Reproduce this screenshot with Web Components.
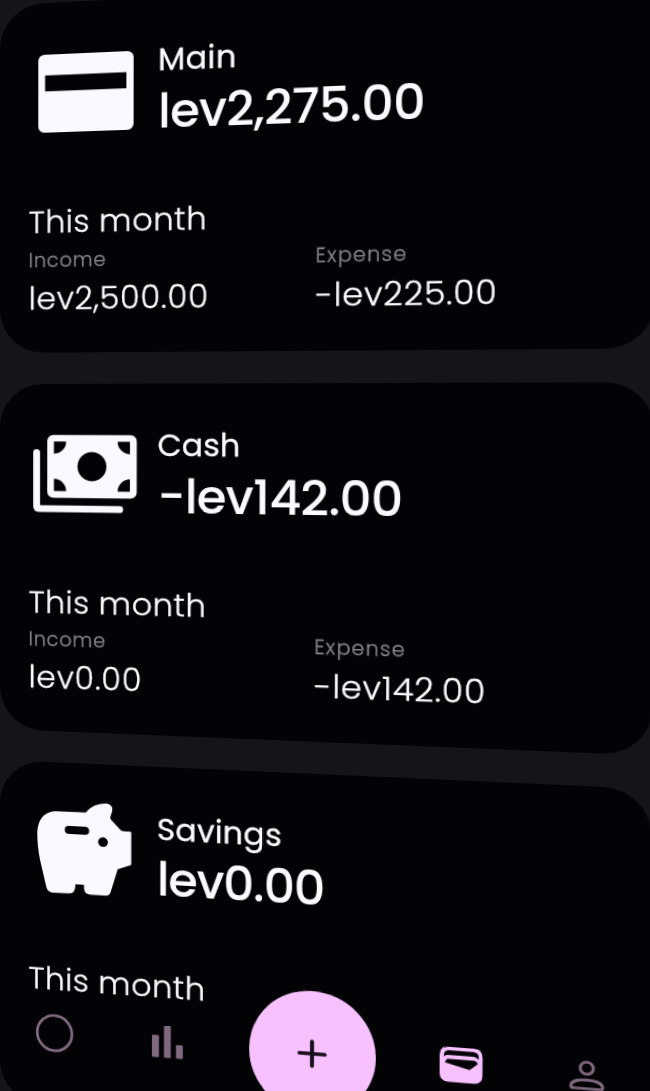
<!DOCTYPE html>
<html lang="en">
<head>
<meta charset="utf-8">
<title>Accounts</title>
<style>
  html, body {
    margin: 0;
    height: 100%;
    overflow: hidden;
    background: #151517;
  }
</style>
</head>
<body>
<accounts-screen>
  <account-card name="Main" name-width="74.5" balance="lev2,275.00" balance-width="248.5">
    <account-icon slot="icon" name="card"></account-icon>
    <money-stat label="Income" label-width="75.2" value="lev2,500.00" value-width="174.5"></money-stat>
    <money-stat label="Expense" label-width="82.3" value="-lev225.00" value-width="164"></money-stat>
  </account-card>
  <account-card name="Cash" name-width="78.5" balance="-lev142.00" balance-width="229">
    <account-icon slot="icon" name="cash"></account-icon>
    <money-stat label="Income" label-width="75.2" value="lev0.00" value-width="110.5"></money-stat>
    <money-stat label="Expense" label-width="82.3" value="-lev142.00" value-width="155.2"></money-stat>
  </account-card>
  <account-card name="Savings" name-width="118.5" balance="lev0.00" balance-width="160">
    <account-icon slot="icon" name="piggy"></account-icon>
  </account-card>
  <nav-bar slot="nav"></nav-bar>
</accounts-screen>

<script>
// Text that is tracked in or out until it takes the given width
class FitText extends HTMLElement {
  constructor() {
    super();
    this.attachShadow({ mode: 'open' }).innerHTML = `
      <style>
        :host { display: block; white-space: nowrap; }
        span { display: inline-block; }
      </style>
      <span></span>
    `;
  }

  connectedCallback() {
    const $span = this.shadowRoot.querySelector('span');
    const text = this.getAttribute('text');
    $span.textContent = text;
    const spare = parseFloat(this.getAttribute('width')) - $span.offsetWidth;
    $span.style.letterSpacing = (spare / (text.length - 1)).toFixed(2) + 'px';
  }
}

const icons = {
  card: `<path fill-rule="evenodd" d="M15 19H96a6 6 0 0 1 6 6V90a6 6 0 0 1-6 6H15a6 6 0 0 1-6-6V25a6 6 0 0 1 6-6zM15.700 39.400V55.200H95V39.400z"/>`,
  cash: `
    <path fill-rule="evenodd" d="M24 18.800H99.500a6 6 0 0 1 6 6V75.200a6 6 0 0 1-6 6H24a6 6 0 0 1-6-6V24.800a6 6 0 0 1 6-6z
      M24.600 25.200V37.400A12 12 0 0 0 36.600 25.200z M98.900 25.200H87A12 12 0 0 0 98.900 37.400z
      M24.600 74.500H36.600A12 12 0 0 0 24.600 62.300z M98.900 74.500V62.300A12 12 0 0 0 87 74.500z
      M61.900 35.600a14.200 14.400 0 1 0 .01 0z"/>
    <path d="M7.500 36.300V89.500Q7.500 92.200 10.200 92.200H89" fill="none" stroke="currentColor" stroke-width="6.800" stroke-linecap="round" stroke-linejoin="round"/>`,
  piggy: `<path fill-rule="evenodd" d="M8.300 41.600C8.300 25 16 17.100 29.100 17.100L56.400 16.800Q59 12.500 65.200 9.300Q71 6.500 76.700 6.700Q82.500 7.500 82.200 13Q81.800 16 80.200 20Q80 22 81.200 23L90.400 32.500Q91.500 33.600 93.500 33.600H99.500Q100.700 33.600 100.700 35V65.500Q100.700 66.500 99.500 67L87.500 71.400L80.700 94.500Q79.500 98.500 76 98.600H61Q54.500 98.400 54.500 91.500V89H46V91Q45.500 98.300 40 98.500L23.500 98.700Q18.500 98.500 17.300 93.500L11 66.500Q8.300 53 8.300 41.600z
    M39.500 30.900a4 4 0 0 0 0 8H55.500a4 4 0 0 0 0-8z M73.100 40.500a4.800 4.800 0 1 0 .01 0z"/>`
};

class AccountIcon extends HTMLElement {
  constructor() {
    super();
    this.attachShadow({ mode: 'open' });
  }

  connectedCallback() {
    this.shadowRoot.innerHTML = `
      <style>
        :host { display: block; width: 111px; height: 115px; color: #f9f9ff; }
        svg { display: block; }
      </style>
      <svg width="111" height="115" viewBox="0 0 111 115" fill="currentColor">${icons[this.getAttribute('name')]}</svg>
    `;
  }
}

class MoneyStat extends HTMLElement {
  constructor() {
    super();
    this.attachShadow({ mode: 'open' });
  }

  connectedCallback() {
    this.shadowRoot.innerHTML = `
      <style>
        :host { display: flex; flex-direction: column; gap: 7px; font-weight: 300; -webkit-text-stroke: 0.300px; }
        .label { font-size: 19px; line-height: 24px; color: #868489; }
        .value { font-size: 31px; line-height: 36px; }
      </style>
      <fit-text class="label" text="${this.getAttribute('label')}" width="${this.getAttribute('label-width')}"></fit-text>
      <fit-text class="value" text="${this.getAttribute('value')}" width="${this.getAttribute('value-width')}"></fit-text>
    `;
  }
}

class AccountCard extends HTMLElement {
  constructor() {
    super();
    this.attachShadow({ mode: 'open' });
  }

  connectedCallback() {
    this.shadowRoot.innerHTML = `
      <style>
        :host {
          display: block;
          box-sizing: border-box;
          height: 346.2px;
          flex: none;
          padding: 32px 0 0 28.5px;
          border-radius: 43px;
          background: #030305;
          color: #fbfaff;
        }
        header { display: flex; gap: 15px; height: 166.700px; }
        .title { display: flex; flex-direction: column; gap: 5.500px; padding-top: 13.500px; }
        .name { font-size: 30px; line-height: 32px; font-weight: 400; -webkit-text-stroke: 0.300px; }
        .balance { font-size: 46px; line-height: 56px; font-weight: 500; }
        .period { font-size: 31px; line-height: 36px; font-weight: 300; -webkit-text-stroke: 0.300px; }
        .stats { display: grid; grid-template-columns: 274.500px 1fr; margin-top: 8.900px; }
      </style>
      <header>
        <slot name="icon"></slot>
        <div class="title">
          <fit-text class="name" text="${this.getAttribute('name')}" width="${this.getAttribute('name-width')}"></fit-text>
          <fit-text class="balance" text="${this.getAttribute('balance')}" width="${this.getAttribute('balance-width')}"></fit-text>
        </div>
      </header>
      <fit-text class="period" text="This month" width="172.5"></fit-text>
      <div class="stats"><slot></slot></div>
    `;
  }
}

class NavBar extends HTMLElement {
  constructor() {
    super();
    this.attachShadow({ mode: 'open' }).innerHTML = `
      <style>
        :host {
          display: grid;
          grid-template-columns: 109px 111px 164px 109px 111px;
          align-items: center;
          justify-items: center;
          height: 122px;
          color: #80697f;
        }
        svg { display: block; overflow: visible; }
        .add {
          display: flex;
          align-items: center;
          justify-content: center;
          width: 118.500px;
          height: 121px;
          border-radius: 50%;
          background: #f7c1ff;
          color: #17101a;
        }
        .active { color: #f7c1ff; }
      </style>
      <svg width="38" height="38" viewBox="0 0 38 38" fill="none" stroke="currentColor" stroke-width="2.700">
        <ellipse cx="18.500" cy="18.700" rx="17.200" ry="17.700"/>
      </svg>
      <svg width="30" height="32" viewBox="0 0 30 32" fill="currentColor">
        <rect x="0" y="9.500" width="6.800" height="22" rx="1"/>
        <rect x="11.600" y="0" width="6.600" height="31.500" rx="1"/>
        <rect x="23.200" y="18" width="6.600" height="13.500" rx="1"/>
      </svg>
      <div class="add">
        <svg width="28" height="28" viewBox="0 0 28 28" fill="none" stroke="currentColor" stroke-width="3.700" stroke-linecap="round">
          <path d="M14 2.200V25.800M2.200 14H25.800"/>
        </svg>
      </div>
      <svg class="active" width="38.500" height="33.500" viewBox="0 0 40 34" preserveAspectRatio="none" fill="currentColor">
        <path fill-rule="evenodd" d="M8 0H32Q40 0 40 8V26Q40 34 32 34H8Q0 34 0 26V8Q0 0 8 0z
          M4 9.800Q5 8 8 7.800H32Q35 8.300 36.500 10.500V7.500Q36 3.800 32 3.400H8Q4.500 3.800 4 7.500z
          M7 11.600L4.700 15.300L28 21L35.600 14.700Q35 12 32.500 11.600z"/>
      </svg>
      <svg width="30" height="30" viewBox="0 0 30 30" fill="none" stroke="currentColor" stroke-width="2.700">
        <ellipse cx="15.500" cy="8.200" rx="5.700" ry="5.700"/>
        <path d="M1.700 25.500C1.700 21.500 7.500 19.300 15.500 19.300S29.300 21.500 29.300 25.500Q29.300 27.500 28 27.500H3Q1.700 27.500 1.700 25.500z"/>
      </svg>
    `;
  }
}

class AccountsScreen extends HTMLElement {
  constructor() {
    super();
    this.attachShadow({ mode: 'open' }).innerHTML = `
      <style>
        :host {
          display: block;
          height: 100vh;
          overflow: hidden;
          font-family: Poppins, Inter, "Open Sans", sans-serif;
        }
        /* screen turned around its left edge */
        .stage {
          position: relative;
          width: 604px;
          transform-origin: 0 407px;
          transform: matrix3d(1, 0, 0, -0.000127, 0, 1, 0, 0.00001, 0, 0, 1, 0, 0, 0, 0, 1);
        }
        .list { display: flex; flex-direction: column; gap: 31.100px; padding-top: 6.600px; }
        /* the bar floats over the list */
        .nav { position: absolute; left: 0; top: 971.800px; }
      </style>
      <div class="stage">
        <div class="list"><slot></slot></div>
        <div class="nav"><slot name="nav"></slot></div>
      </div>
    `;
  }
}

// outermost first, so the font is inherited by the time FitText measures
window.customElements.define('accounts-screen', AccountsScreen);
window.customElements.define('account-card', AccountCard);
window.customElements.define('account-icon', AccountIcon);
window.customElements.define('money-stat', MoneyStat);
window.customElements.define('nav-bar', NavBar);
window.customElements.define('fit-text', FitText);
</script>
</body>
</html>
